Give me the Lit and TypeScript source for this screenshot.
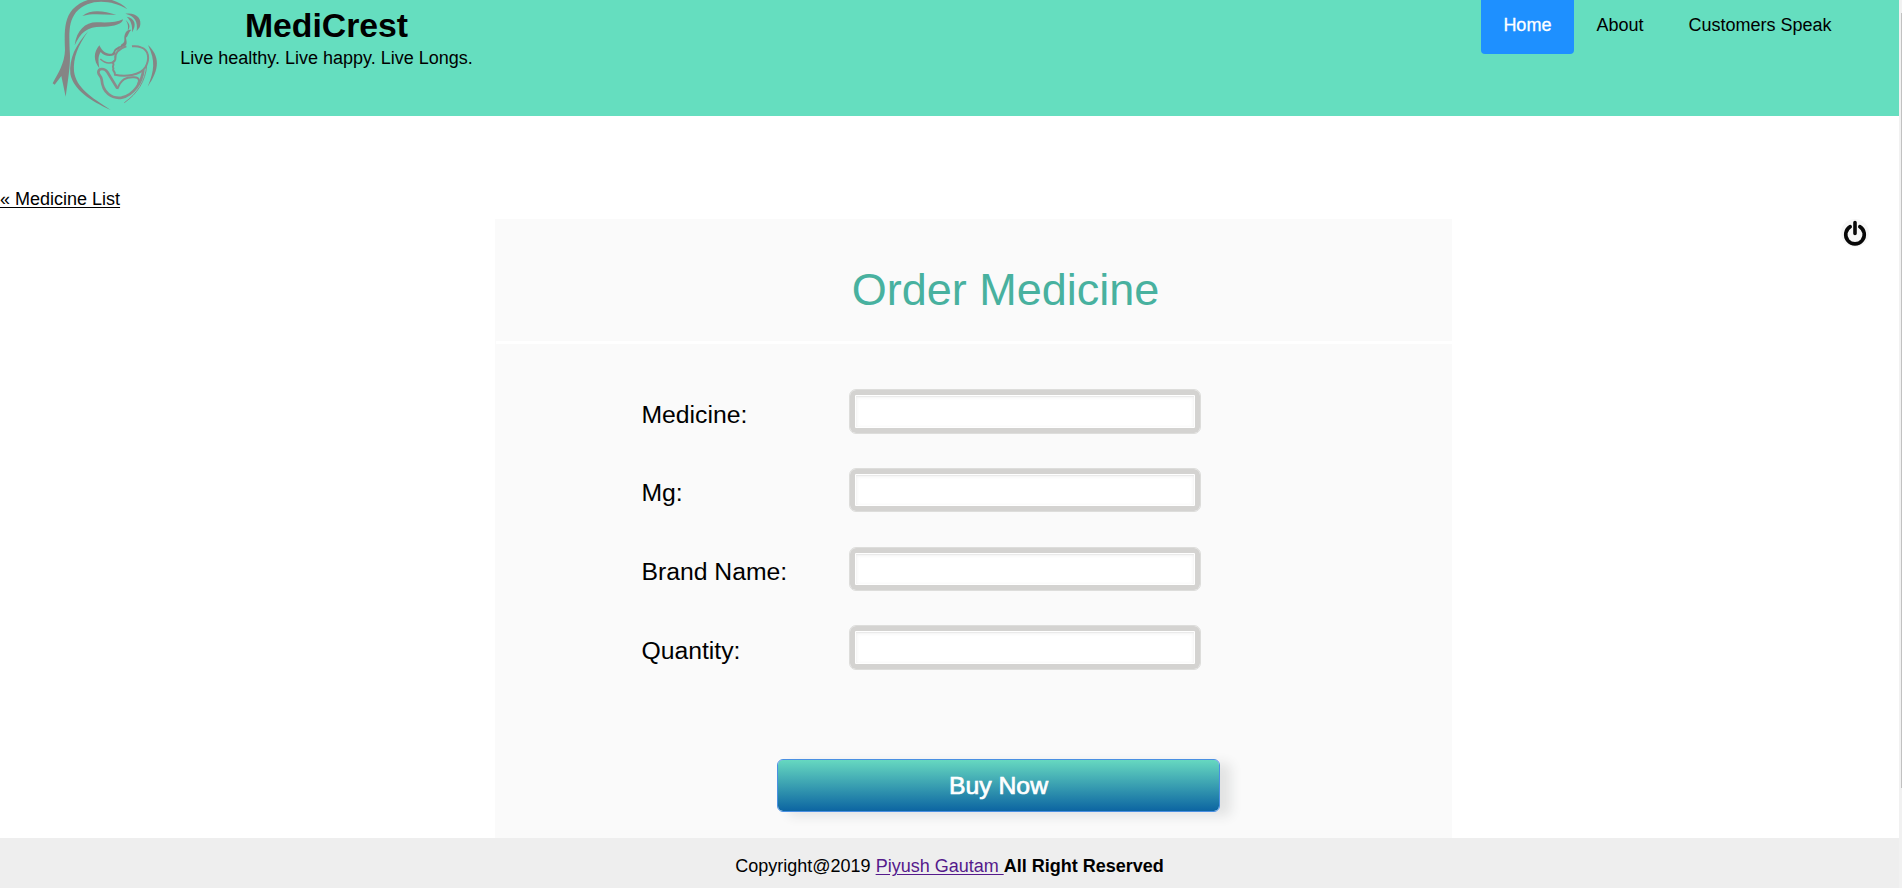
import { LitElement, html, css } from "lit";
import { customElement } from "lit/decorators.js";

@customElement("app-root")
export class AppRoot extends LitElement {
  static styles = css`
    :host { display: flex; height: 888px; overflow: hidden; background: #fff; color: #000; font: 18px/20px "Liberation Sans", Arial, sans-serif; }
    * { box-sizing: border-box; }
    .page { flex: 1; display: flex; flex-direction: column; min-width: 0; }
    header { height: 116px; flex: none; background: #65debf; display: flex; align-items: flex-start; padding-left: 40px; }
    .logo { width: 130px; height: 116px; flex: none; }
    .brand { width: 313px; text-align: center; padding-top: 4px; }
    h1 { margin: 0; font-size: 33.75px; line-height: 42px; }
    .tag { margin: 2px 0 0; line-height: 20px; }
    nav { margin-left: auto; margin-right: 45px; display: flex; }
    nav a { height: 54px; padding: 15px 22.5px 0; line-height: 20px; color: #000; text-decoration: none; }
    nav a.active { background: #1e90ff; color: #fff; border-radius: 0 0 4px 4px; -webkit-text-stroke: .3px #fff; }
    .back { margin-top: 73px; height: 30px; line-height: 20px; flex: none; }
    .back a { color: #000; text-underline-offset: 2px; }
    .main { display: grid; grid-template-columns: 495px 957px 1fr; flex: 1; min-height: 0; }
    .panel { grid-column: 2; background: #fafafa; }
    h2 { margin: 0; height: 122px; padding: 45px 0 0 64px; font-weight: 400; font-size: 45px; line-height: 52px; color: #48b19f; text-align: center; }
    .rule { height: 3px; background: #fff; margin-left: 1px; }
    .fields { padding: 45.3px 0 0 146.4px; display: grid; row-gap: 34.2px; }
    .row { display: grid; grid-template-columns: 208px 352px; height: 44.5px; }
    .row span { font-size: 24.75px; line-height: 28px; padding-top: 11.4px; }
    input { width: 352px; height: 44.5px; border: 1px solid #dddddb; border-radius: 7px; background: #fff; background-clip: padding-box; box-shadow: inset 0 0 0 5px #d4d3d1, inset 0 0 0 6px #fff, inset 0 1px 1px 6px #e9e9e9, inset 0 1px 4px 6px #f0f0f0; outline: none; font: inherit; }
    button { display: block; margin: 89.2px 0 0 282px; width: 443px; height: 53px; border: 1px solid #4a90e2; border-radius: 6px; background: linear-gradient(#66d8c0, #0c65a2); background-clip: padding-box; color: #fff; font: 24.75px "Liberation Sans", Arial, sans-serif; -webkit-text-stroke: .7px #fff; box-shadow: 11px 4px 12px #e2e3e3; padding: 0; }
    .power { justify-self: end; margin: 0 29px 0 0; width: 30px; height: 30px; }
    footer { height: 50px; flex: none; background: #eee; text-align: center; padding-top: 18px; }
    footer a { color: #551a8b; text-underline-offset: 2px; }
    .scroll { width: 3px; flex: none; background: #f1f1f1; padding: 13px 0 0 2px; }
    .thumb { height: 775px; background: #c1c1c1; }
  `;

  render() {
    return html`
      <div class="page">
        <header>
          <svg class="logo" viewBox="0 0 390 348" fill="#858585">
            <path d="M262 28C230-10 145-22 98 28C72 58 73 100 75 150C74 190 54 220 38 250L44 254L64 228L77 290C84 240 93 190 89 150C87 98 86 65 108 37C145-5 212-2 262 28Z"/>
            <path d="M127 48C155 25 193 34 229 44C194 46 161 38 127 48Z"/>
            <path d="M104 136C110 91 135 67 170 67C204 68 230 68 249 58C249 72 219 81 188 80C143 79 122 96 104 136Z"/>
            <path d="M256 41C285 36 309 53 299 82L290 93C294 64 284 48 256 41ZM260 50C285 55 291 74 276 97C278 76 273 62 260 50ZM257 60C271 72 271 83 263 92C266 79 264 70 257 60Z"/>
            <path d="M145 93C107 135 87 175 91 222C101 270 151 302 212 330C154 292 108 263 102 214C99 173 114 136 145 93Z"/>
            <path d="M324 135C359 168 361 206 323 260C343 213 347 183 324 135Z"/>
            <path d="M178 136C160 157 160 182 178 205C175 184 173 170 182 156C191 168 210 171 223 165C229 159 222 155 231 150C240 147 240 142 252 139C263 134 260 127 258 113C265 109 266 95 274 90C260 86 252 104 253 116C255 133 242 130 242 138C232 140 230 144 224 148C218 158 220 163 207 161C194 160 184 149 178 136Z"/>
            <g fill="none" stroke="#8b8b8b" stroke-width="8">
              <path d="M259 139C235 146 223 162 226 177C226 183 216 186 219 190C225 194 214 200 220 205C216 214 225 211 225 224C254 231 301 227 316 202C330 177 327 150 303 142C294 138 285 138 276 139" stroke-width="6"/>
              <path d="M225 183C210 193 195 190 181 177" stroke-width="5"/>
              <path d="M232 265L202 216C194 204 175 204 175 217C175 226 183 226 185 239C188 278 215 297 245 293C281 285 306 247 310 210"/>
              <path d="M232 267C244 235 259 231 282 232C303 233 297 248 293 252" stroke-width="6"/>
              <path d="M320 196C317 243 291 282 253 308" stroke-width="3"/>
            </g>
          </svg>
          <div class="brand"><h1>MediCrest</h1><p class="tag">Live healthy. Live happy. Live Longs.</p></div>
          <nav><a class="active">Home</a><a>About</a><a>Customers Speak</a></nav>
        </header>
        <div class="back"><a href="#">« Medicine List</a></div>
        <div class="main">
          <div class="panel">
            <h2>Order Medicine</h2>
            <div class="rule"></div>
            <div class="fields">
              ${["Medicine:", "Mg:", "Brand Name:", "Quantity:"].map(l => html`<label class="row"><span>${l}</span><input type="text"></label>`)}
            </div>
            <button>Buy Now</button>
          </div>
          <svg class="power" viewBox="0 0 30 30"><circle cx="15" cy="14" r="14" fill="#f7f7f7"/><path d="M10.2 7.6A9.3 9.3 0 1 0 19.8 7.6M15 3.5V14.5" fill="none" stroke="#080808" stroke-width="3.6" stroke-linecap="round"/></svg>
        </div>
        <footer>Copyright@2019 <a href="#">Piyush Gautam </a><b>All Right Reserved</b></footer>
      </div>
      <div class="scroll"><div class="thumb"></div></div>
    `;
  }
}
